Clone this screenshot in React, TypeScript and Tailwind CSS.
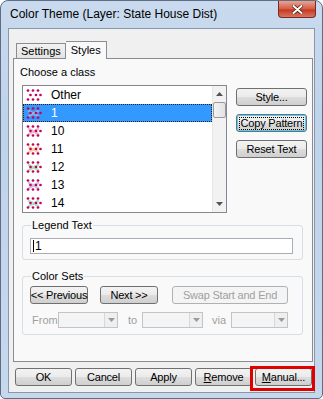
import React from 'react';
import clsx from 'clsx';

const btnFace =
  'bg-[linear-gradient(#f3f3f3,#ebebeb_48%,#dddddd_52%,#cfcfcf)] border border-[#707070] rounded-[3px]';

interface BtnProps {
  label: React.ReactNode;
  className?: string;
  disabled?: boolean;
  focused?: boolean;
}

const Btn: React.FC<BtnProps> = ({ label, className, disabled, focused }) => (
  <div
    className={clsx(
      'flex items-center justify-center text-[11px] leading-none whitespace-nowrap tracking-[-0.2px]',
      disabled
        ? 'bg-[#f4f4f4] border border-[#adb2b5] rounded-[3px] text-[#a0a0a0]'
        : clsx(btnFace, 'text-black'),
      focused && 'border-[#3c7fb1] shadow-[inset_0_0_0_1px_#48d0fd]',
      className
    )}
  >
    <span className={clsx(focused && 'outline outline-1 outline-dotted outline-black px-[1px]')}>{label}</span>
  </div>
);

const rows = [
  { label: 'Other', tint: '' },
  { label: '1', tint: '#9db6e6' },
  { label: '10', tint: '#eaa9c9' },
  { label: '11', tint: '#f2cb8e' },
  { label: '12', tint: '#9fd9ad' },
  { label: '13', tint: '#c3b2e4' },
  { label: '14', tint: '#9fd8c6' },
];

const DotIcon: React.FC<{ tint: string }> = ({ tint }) => (
  <svg width="16" height="12" viewBox="0 0 16 12" className="shrink-0">
    {tint && (
      <path d="M3 4 L12 9 M12 4 L3 9" stroke={tint} strokeWidth="2.5" strokeLinecap="round" opacity="0.8" />
    )}
    {[
      [2, 1.5], [7, 1.5], [12, 1.5],
      [4.5, 6], [10, 6], [14.5, 6],
      [2, 10.5], [7, 10.5], [12, 10.5],
    ].map(([x, y], i) => (
      <circle key={i} cx={x} cy={y} r="1.35" fill="#c4005a" />
    ))}
  </svg>
);

const Combo: React.FC<{ w: string }> = ({ w }) => (
  <div className={clsx('h-[16px] border border-[#c2c5c8] bg-[#f4f4f4] flex justify-end', w)}>
    <div className="w-[13px] h-full border-l border-[#d6d8da] bg-[#efefef] flex items-center justify-center">
      <svg width="7" height="4" viewBox="0 0 7 4">
        <path d="M0 0 H7 L3.5 4 Z" fill="#9a9a9a" />
      </svg>
    </div>
  </div>
);

export default function App() {
  return (
    <div className="w-[323px] h-[399px] bg-white overflow-hidden font-['Liberation_Sans',Arial,sans-serif] text-[11px] text-black">
      <div className="w-[323px] h-[399px] rounded-t-[8px] rounded-b-[5px] border border-[#5d6e84] bg-[linear-gradient(#c9daee,#bfd3ea_30%,#c6d8ec)] flex flex-col">
        {/* title bar */}
        <div className="h-[27px] flex items-start justify-between shrink-0">
          <div className="pl-[9px] pt-[6px] text-[12px] leading-[14px] text-black">
            Color Theme (Layer: State House Dist)
          </div>
          <div className="mr-[6px] w-[38px] h-[17px] rounded-b-[4px] border border-t-0 border-[#7a2a22] bg-[linear-gradient(#e8a493,#d45c46_50%,#c3381f_55%,#d87660)] flex items-center justify-center">
            <svg width="11" height="9" viewBox="0 0 11 9">
              <path d="M1.5 1 L9.5 8 M9.5 1 L1.5 8" stroke="#4a1810" strokeWidth="3.4" strokeLinecap="round" />
              <path d="M1.5 1 L9.5 8 M9.5 1 L1.5 8" stroke="#fff" strokeWidth="2" strokeLinecap="round" />
            </svg>
          </div>
        </div>

        {/* client */}
        <div className="ml-[7px] w-[307px] h-[365px] border border-[#8797ae] bg-[#f0f0f0] flex flex-col">
          {/* tabs */}
          <div className="pt-[12px] pl-[7px] flex items-end h-[29px] shrink-0">
            <div className="h-[15px] px-[4px] border border-b-0 border-[#898c95] bg-[linear-gradient(#f2f2f2,#e3e3e3)] flex items-center">
              Settings
            </div>
            <div className="h-[18px] -mb-[1px] px-[5px] border border-b-0 border-l-0 border-[#898c95] bg-[#f9f9f9] flex items-center relative z-10">
              Styles
            </div>
          </div>

          <div className="ml-[4px] w-[300px] h-[304px] border border-[#898c95] bg-[#f9f9f9] flex flex-col pl-[6px]">
            <div className="mt-[7px] leading-[12px] h-[12px]">Choose a class</div>

            <div className="mt-[7px] flex items-start">
              {/* list */}
              <div className="ml-[2px] w-[205px] h-[128px] border border-[#828790] bg-white flex">
                <div className="flex-1 flex flex-col">
                  {rows.map((r, i) => (
                    <div
                      key={r.label}
                      className={clsx(
                        'h-[18px] flex items-center gap-[9px] pl-[3px]',
                        i === 1 && 'bg-[#3399ff] text-white outline outline-1 outline-dotted outline-[#222] -outline-offset-1'
                      )}
                    >
                      <DotIcon tint={r.tint} />
                      <span className="text-[12px] leading-none">{r.label}</span>
                    </div>
                  ))}
                </div>
                <div className="w-[14px] bg-[#f2f2f2] border-l border-[#e6e6e6] flex flex-col items-center">
                  <div className="h-[16px] flex items-center justify-center">
                    <svg width="7" height="4" viewBox="0 0 7 4">
                      <path d="M0 4 H7 L3.5 0 Z" fill="#555" />
                    </svg>
                  </div>
                  <div className="w-[13px] h-[16px] rounded-[2px] border border-[#9a9a9a] bg-[linear-gradient(90deg,#f3f3f3,#e2e2e2)]" />
                  <div className="flex-1" />
                  <div className="h-[16px] flex items-center justify-center">
                    <svg width="7" height="4" viewBox="0 0 7 4">
                      <path d="M0 0 H7 L3.5 4 Z" fill="#555" />
                    </svg>
                  </div>
                </div>
              </div>

              {/* right buttons */}
              <div className="ml-[9px] mt-[3px] flex flex-col gap-[8px]">
                <Btn label="Style..." className="w-[71px] h-[18px]" />
                <Btn label="Copy Pattern" focused className="w-[71px] h-[18px]" />
                <Btn label="Reset Text" className="w-[71px] h-[18px]" />
              </div>
            </div>

            {/* legend text */}
            <fieldset className="mt-[6px] ml-[2px] w-[281px] border border-[#d5dfe5] rounded-[3px] px-[7px] pb-[5px]">
              <legend className="ml-[1px] px-[1px] leading-[12px]">Legend Text</legend>
              <div className="mt-[7px] w-[263px] h-[16px] border border-[#abadb3] bg-white flex items-center pl-[2px] text-[12px] leading-none">
                <span className="border-l border-black pl-[1px]">1</span>
              </div>
            </fieldset>

            {/* color sets */}
            <fieldset className="mt-[10px] ml-[2px] w-[281px] border border-[#d5dfe5] rounded-[3px] px-[7px] pb-[5px]">
              <legend className="ml-[1px] px-[1px] leading-[12px]">Color Sets</legend>
              <div className="mt-[4px] flex items-center">
                <Btn label="<< Previous" className="w-[58px] h-[18px]" />
                <Btn label="Next >>" className="ml-[12px] w-[58px] h-[18px]" />
                <Btn label="Swap Start and End" disabled className="ml-[14px] w-[116px] h-[18px]" />
              </div>
              <div className="mt-[8px] flex items-center text-[#a0a0a0]">
                <span className="ml-[2px] w-[26px]">From</span>
                <Combo w="w-[60px]" />
                <span className="ml-[10px] w-[14px]">to</span>
                <Combo w="w-[61px]" />
                <span className="ml-[9px] w-[19px]">via</span>
                <Combo w="w-[57px]" />
              </div>
            </fieldset>
          </div>

          {/* bottom buttons */}
          <div className="mt-[6px] pl-[6px] flex gap-[3px]">
            <Btn label="OK" className="w-[57px] h-[18px]" />
            <Btn label="Cancel" className="w-[57px] h-[18px]" />
            <Btn label="Apply" className="w-[57px] h-[18px]" />
            <Btn label={<><span className="underline">R</span>emove</>} className="w-[57px] h-[18px]" />
            <div className="relative">
              <Btn label={<><span className="underline">M</span>anual...</>} className="w-[57px] h-[18px]" />
              <div className="absolute -left-[5px] -right-[3px] -top-[2px] -bottom-[5px] border-[3px] border-[#e10000]" />
            </div>
          </div>
        </div>
      </div>
    </div>
  );
}
